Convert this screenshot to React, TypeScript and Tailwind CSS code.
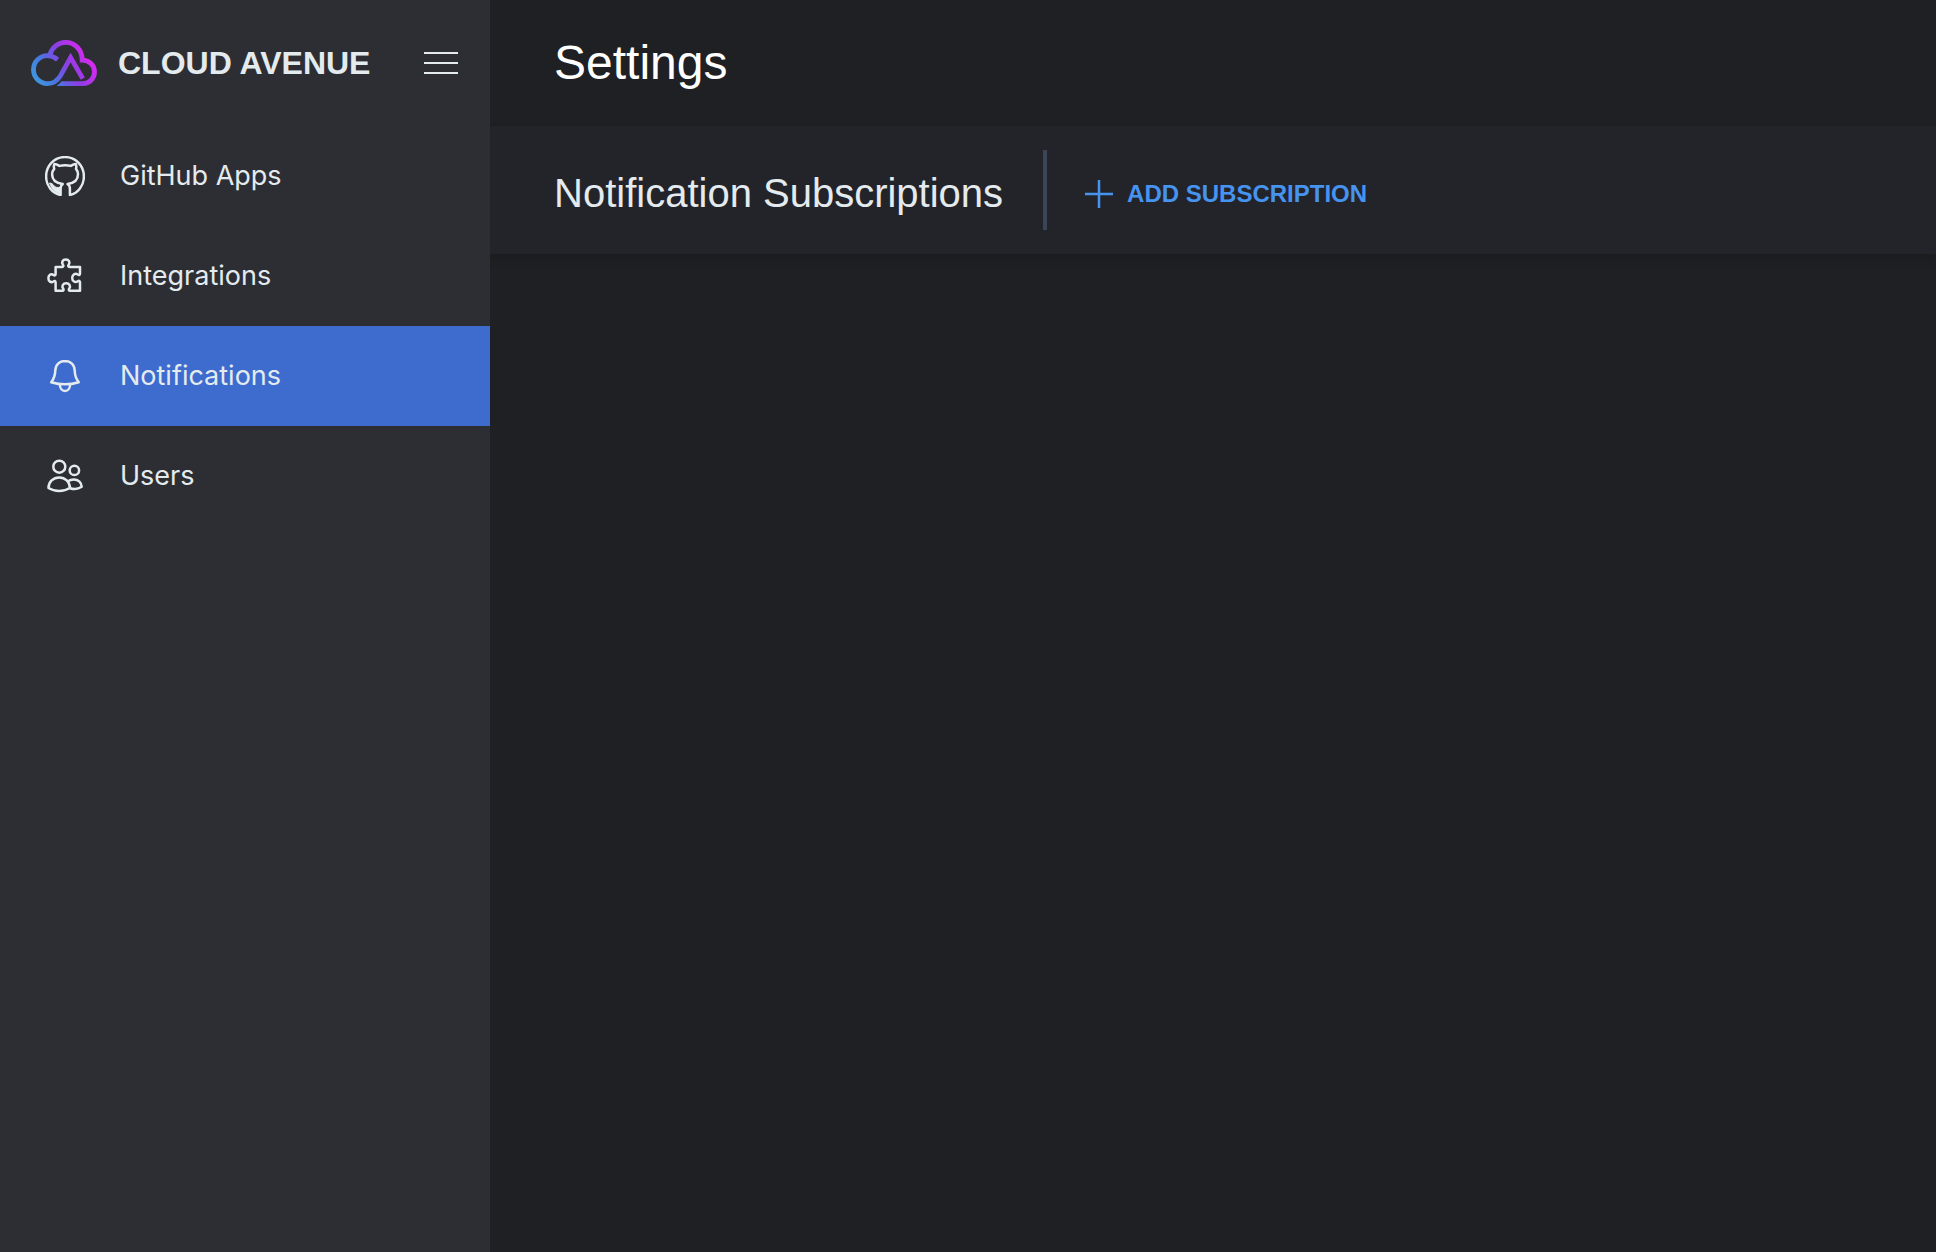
import type { ReactNode } from "react";

function Logo() {
  return (
    <svg viewBox="31 38 67 50" className="h-[50px] w-[67px] shrink-0" fill="none" aria-hidden="true">
      <defs>
        <linearGradient id="brand" gradientUnits="userSpaceOnUse" x1="35" y1="84" x2="88" y2="52">
          <stop offset="0" stopColor="#3f9bdc" />
          <stop offset="0.28" stopColor="#4678e0" />
          <stop offset="0.6" stopColor="#8a3fe6" />
          <stop offset="1" stopColor="#dc28f0" />
        </linearGradient>
      </defs>
      <g stroke="url(#brand)" strokeWidth="4.8">
        <path d="M57.6 59.6C54.5 57 51 55.6 47.4 55.6C39.8 55.6 33.5 61.8 33.5 69.6C33.5 77.4 39.8 83.6 47.4 83.6C53 83.6 57.3 81 60.5 75.6L70.6 57.6L82.8 78.6" strokeMiterlimit="10" />
        <path d="M50 54.5C51.8 47.4 58.2 42.4 65.6 42.4C74.9 42.4 82.4 50 82.2 60.2C89.2 60.2 94.5 65.2 94.5 71.8C94.5 78.6 89.4 83.6 82.8 83.6H61.5" />
      </g>
      <path d="M56.6 86L62 81.2V86Z" fill="#4678e0" />
    </svg>
  );
}

function Icon({ children }: { children: ReactNode }) {
  return (
    <svg viewBox="0 0 40 40" className="size-10 shrink-0" fill="none" stroke="currentColor" strokeWidth="2.5" strokeLinejoin="round" aria-hidden="true">
      {children}
    </svg>
  );
}

const items = [
  {
    label: "GitHub Apps",
    icon: (
      <Icon>
        <path d="M15.6 39C7 37 1.100 29.600 1.100 20.400C1.100 9.600 9.400 1.100 20 1.100C30.600 1.100 38.900 9.600 38.900 20.400C38.900 29.600 33 37 24.900 39V32.500C24.900 30.200 24 28.800 22.600 28.100C29 27.200 33 24.500 33 18.300C33 16 32.200 14.300 31 12.900C31.500 11.200 31.400 9.600 30.900 8.100C29.200 8.100 27.500 8.800 25.800 9.900C22 9 18.200 9 14.400 9.900C12.700 8.800 11 8.100 9.300 8.100C8.700 9.600 8.700 11.200 9.200 12.900C7.900 14.300 7.100 16 7.100 18.300C7.100 24.500 11.200 27.200 17.700 28.100C16.500 28.800 15.800 30.200 15.600 32Z" />
        <path d="M4.500 27C8.400 26.900 8.600 30.700 11.200 31.300C12.800 31.700 14.400 31.400 15.600 31V37.600C11.200 37 9 35.300 7.200 32.300C6.300 30.700 5.300 29 4.500 27Z" fill="currentColor" strokeWidth="1" />
      </Icon>
    ),
  },
  {
    label: "Integrations",
    icon: (
      <Icon>
        <path d="M10.600 10.900H17C18.600 10.900 18.700 9.800 17.900 8.700C16.200 6.200 17.700 3.500 20.800 3.500C23.900 3.500 25.400 6.200 23.700 8.700C22.900 9.800 23 10.900 24.600 10.900H35V17.600C35 19.200 33.900 19.300 32.800 18.500C30.200 16.900 27.200 18.500 27.200 21.900C27.200 25.300 30.200 26.900 32.800 25.300C33.900 24.500 35 24.600 35 26.200V34.800H25.200C23.600 34.800 23.500 33.700 24.300 32.600C26 30.100 24.500 27.300 21.200 27.300C17.900 27.300 16.400 30.100 18.100 32.600C18.900 33.700 18.800 34.800 17.200 34.800H10.600V26.400C10.600 24.800 9.500 24.700 8.400 25.500C5.900 27.100 3.400 25.300 3.400 22.200C3.400 19.100 5.900 17.300 8.400 18.900C9.500 19.700 10.600 19.600 10.600 18Z" />
      </Icon>
    ),
  },
  {
    label: "Notifications",
    active: true,
    icon: (
      <Icon>
        <path d="M20 5C14.400 5 10.500 8.800 10.300 14.400C10.200 19.800 9.300 22.400 6.200 26.200C14.900 28.900 25.100 28.900 33.800 26.200C30.700 22.400 29.800 19.800 29.700 14.400C29.500 8.800 25.600 5 20 5Z" />
        <path d="M14.900 28.400C14.900 31.900 16.900 34.900 20 34.900C23.100 34.900 25.100 31.900 25.100 28.400" />
      </Icon>
    ),
  },
  {
    label: "Users",
    icon: (
      <Icon>
        <circle cx="14.300" cy="10.700" r="6" />
        <circle cx="29.400" cy="14.400" r="4.700" />
        <path d="M14.200 21.400C8.200 21.400 3.500 26 3.500 32C9.600 35.900 18.800 35.900 24.900 32C24.900 26 20.200 21.400 14.200 21.400Z" />
        <path d="M23 25.200C24.700 23.900 26.700 23.400 28.800 23.400C33 23.400 36.500 26.300 36.700 30.800C33.700 32.900 28.800 33.500 24.900 32.200" />
      </Icon>
    ),
  },
];

export default function App() {
  return (
    <div className="flex min-h-screen bg-[#1f2023] font-['Liberation_Sans',Arial,sans-serif] text-[#e4ebef]">
      <aside className="z-10 w-[490px] shrink-0 bg-[#2d2e33]">
        <div className="flex h-[126px] items-center pr-8 pl-[31px]">
          <Logo />
          <span className="ml-5 text-[32px] leading-10 font-bold">CLOUD AVENUE</span>
          <button type="button" aria-label="Toggle menu" className="ml-auto flex w-[34px] flex-col gap-2">
            <span className="h-0.5 w-full bg-current" />
            <span className="h-0.5 w-full bg-current" />
            <span className="h-0.5 w-full bg-current" />
          </button>
        </div>
        <nav>
          {items.map((item) => (
            <a
              key={item.label}
              href="#"
              aria-current={item.active ? "page" : undefined}
              className={`flex h-[100px] items-center gap-[35px] pl-[45px] font-['Inter',sans-serif] text-[27px] ${item.active ? "bg-[#3d6bce]" : ""}`}
            >
              {item.icon}
              {item.label}
            </a>
          ))}
        </nav>
      </aside>
      <main className="min-w-0 flex-1">
        <header className="flex h-[126px] items-center px-16">
          <h1 className="text-5xl text-white">Settings</h1>
        </header>
        <section className="flex h-32 items-center bg-[#232429] px-16 shadow-[0_6px_10px_rgba(0,0,0,0.12)]">
          <h2 className="pt-1.5 text-[40px] leading-12">Notification Subscriptions</h2>
          <div className="ml-10 h-20 w-1 bg-[#3b4557]" />
          <button type="button" className="ml-[38px] flex items-center gap-[14px] pt-2 text-2xl font-bold text-[#4693f0]">
            <svg viewBox="0 0 28 28" className="size-7" stroke="currentColor" strokeWidth="2.5" aria-hidden="true">
              <path d="M14 0V28M0 14H28" />
            </svg>
            ADD SUBSCRIPTION
          </button>
        </section>
      </main>
    </div>
  );
}
